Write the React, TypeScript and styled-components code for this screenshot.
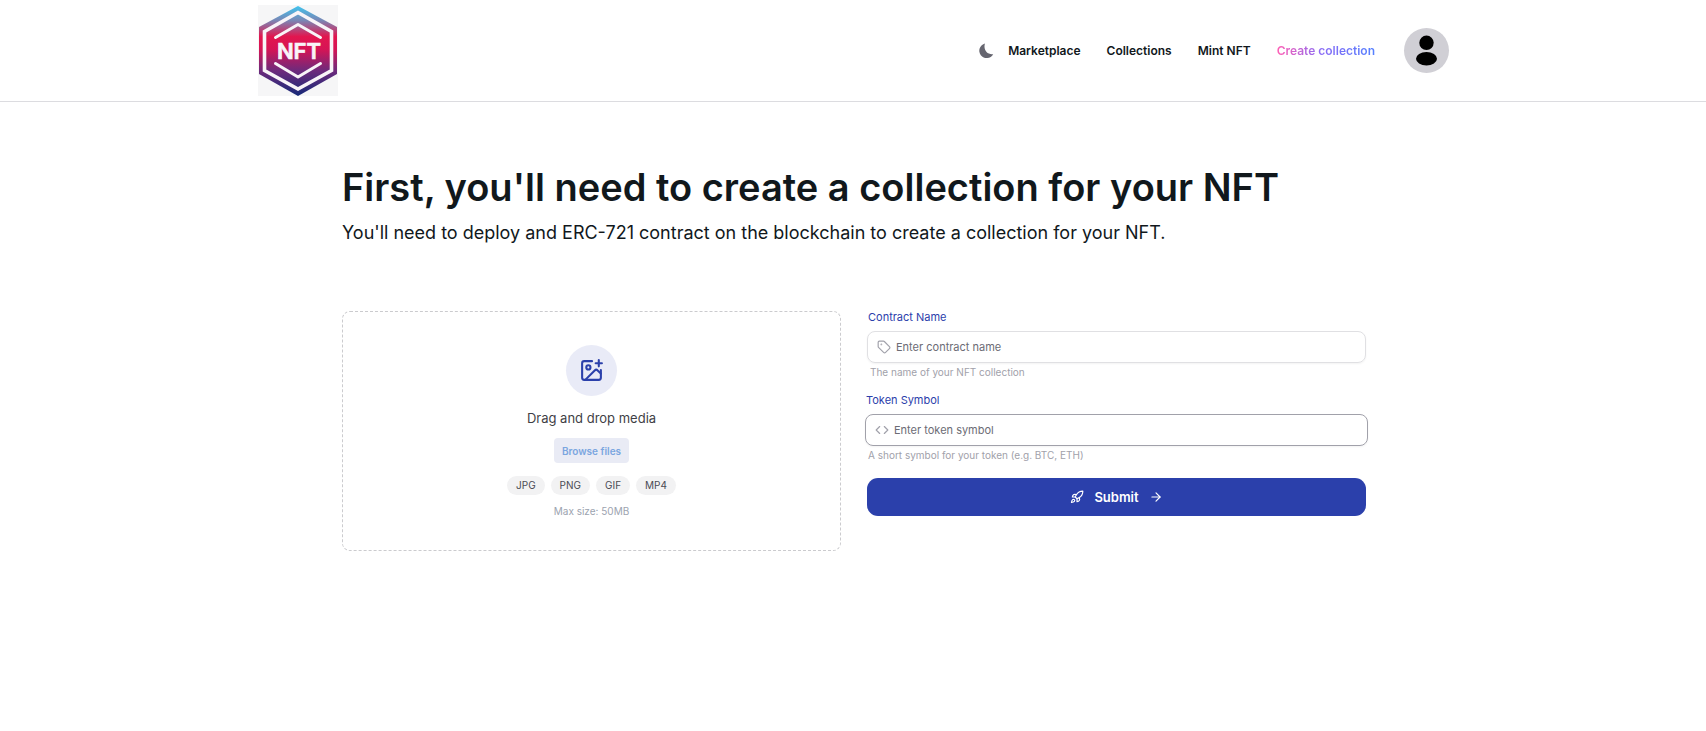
import React from 'react';
import styled, { createGlobalStyle, css } from 'styled-components';
import { ArrowRight, Code, ImagePlus, Rocket, Tag } from 'lucide-react';

const GlobalStyle = createGlobalStyle`
  *, *::before, *::after { box-sizing: border-box; }
  body {
    margin: 0;
    background: #fff;
    color: #11181c;
    font-family: Inter, "Liberation Sans", sans-serif;
  }
  h1, p, ul { margin: 0; padding: 0; }
  ul { list-style: none; }
  button, input { font-family: inherit; }
`;

const Header = styled.header`
  border-bottom: 1px solid #dcdce0;
`;

const HeaderInner = styled.div`
  display: flex;
  align-items: center;
  justify-content: space-between;
  max-width: 1192px;
  margin: 0 auto;
  padding: 5px 0 5px 1px;
`;

const LogoLink = styled.a`
  display: block;
  width: 80px;
  height: 91px;
  background: #f6f6f7;

  svg { display: block; }
`;

const Nav = styled.nav`
  display: flex;
  align-items: center;
`;

const ThemeButton = styled.button`
  display: flex;
  margin-right: 14px;
  padding: 0;
  border: 0;
  background: none;
  cursor: pointer;
`;

const NavList = styled.ul`
  display: flex;
  gap: 26px;
  margin-right: 29px;
`;

const NavLink = styled.a<{ $active?: boolean }>`
  display: block;
  color: #11181c;
  font-size: 12px;
  font-weight: 600;
  line-height: 20px;
  text-decoration: none;
  ${({ $active }) =>
    $active &&
    css`
      background: linear-gradient(90deg, #ff5fb4, #8b6cf5 45%, #5581ff);
      background-clip: text;
      color: transparent;
    `}
`;

const Avatar = styled.button`
  width: 45px;
  height: 45px;
  padding: 0;
  border: 0;
  border-radius: 50%;
  background: #d0cfd5;
  cursor: pointer;

  svg { display: block; }
`;

const Main = styled.main`
  max-width: 1026px;
  margin: 0 auto;
  padding: 60px 0 40px 2px;
`;

const Title = styled.h1`
  font-size: 38px;
  font-weight: 600;
  line-height: 50px;
`;

const Subtitle = styled.p`
  margin-top: 6px;
  font-size: 18px;
  line-height: 30px;
`;

const Columns = styled.div`
  display: grid;
  grid-template-columns: repeat(auto-fit, minmax(400px, 1fr));
  gap: 26px;
  align-items: start;
  margin-top: 63px;
`;

const DropZone = styled.section`
  display: flex;
  flex-direction: column;
  align-items: center;
  padding: 33px 24px 31px;
  border: 1px dashed #cbcbce;
  border-radius: 8px;
`;

const IconDisc = styled.div`
  display: grid;
  place-items: center;
  width: 51px;
  height: 51px;
  border-radius: 50%;
  background: #e9ebf7;
  color: #2b40ab;
`;

const DropText = styled.p`
  margin-top: 12px;
  color: #3f3f46;
  font-size: 13px;
  font-weight: 400;
  line-height: 20px;
`;

const BrowseButton = styled.button`
  height: 25px;
  margin-top: 10px;
  padding: 0 8px;
  border: 0;
  border-radius: 4px;
  background: #e9ebf5;
  color: #7ba6e0;
  font-size: 10px;
  font-weight: 600;
  cursor: pointer;
`;

const Chips = styled.ul`
  display: flex;
  gap: 6px;
  margin-top: 13px;
`;

const Chip = styled.li`
  padding: 0 9px;
  border-radius: 10px;
  background: #f2f2f3;
  color: #4b4b54;
  font-size: 10px;
  line-height: 19px;
`;

const Limit = styled.p`
  margin-top: 8px;
  color: #9ca3af;
  font-size: 10px;
  line-height: 16px;
`;

const Form = styled.form`
  display: flex;
  flex-direction: column;
`;

const Field = styled.div<{ $raised?: boolean }>`
  margin: ${({ $raised }) => ($raised ? '0 -2px 17px' : '0 0 16px')};
`;

const Label = styled.label`
  display: block;
  padding: 0 1px;
  color: #2b40ab;
  font-size: 11px;
  line-height: 12px;
`;

const InputShell = styled.div<{ $raised?: boolean }>`
  display: flex;
  align-items: center;
  gap: 5px;
  height: 32px;
  margin-top: 8px;
  padding: 0 9px;
  border: 1px solid ${({ $raised }) => ($raised ? '#a1a1aa' : '#e0e0e3')};
  border-radius: 8px;
  box-shadow: 0 1px 2px rgba(0, 0, 0, 0.05);
  color: #a1a1aa;

  svg { flex: none; }
`;

const Input = styled.input`
  flex: 1;
  min-width: 0;
  padding: 0;
  border: 0;
  outline: 0;
  background: none;
  color: #11181c;
  font-size: 11px;
  line-height: 16px;

  &::placeholder { color: #6c6c75; opacity: 1; }
`;

const Hint = styled.p`
  margin-top: 3px;
  padding: 0 3px;
  color: #a1a1aa;
  font-size: 10px;
  line-height: 12px;
`;

const SubmitButton = styled.button`
  display: flex;
  align-items: center;
  justify-content: center;
  gap: 10px;
  height: 38px;
  border: 0;
  border-radius: 11px;
  background: #2b40ab;
  color: #fff;
  font-size: 13px;
  font-weight: 600;
  cursor: pointer;
`;

const NAV_ITEMS = [
  { label: 'Marketplace' },
  { label: 'Collections' },
  { label: 'Mint NFT' },
  { label: 'Create collection', active: true },
];

const FORMATS = ['JPG', 'PNG', 'GIF', 'MP4'];

function Logo() {
  return (
    <svg width="80" height="91" viewBox="0 0 80 91" fill="none" aria-hidden="true">
      <defs>
        <linearGradient id="logoFill" x1="0" y1="0" x2="0" y2="1">
          <stop offset="0" stopColor="#3fc4ee" />
          <stop offset="0.16" stopColor="#7a86b5" />
          <stop offset="0.34" stopColor="#e2164f" />
          <stop offset="0.48" stopColor="#d61455" />
          <stop offset="0.72" stopColor="#6d2a7c" />
          <stop offset="1" stopColor="#152a78" />
        </linearGradient>
      </defs>
      <path d="M40 1 79 22v47L40 91 1 69V22Z" fill="url(#logoFill)" />
      <path d="M40 7.500 73.500 26.500V65.500L40 84 6.500 65.500V26.500Z" stroke="#f8f4f8" strokeWidth="3.600" />
      <path d="M17.500 32.500 40 19.500 62.500 32.500M17.500 58.500 40 72 62.500 58.500" stroke="#f8f4f8" strokeWidth="3" strokeLinecap="round" strokeLinejoin="round" />
      <text x="41" y="53.500" textAnchor="middle" fill="#f8f4f8" stroke="#f8f4f8" strokeWidth="0.700" fontFamily="Inter, sans-serif" fontSize="22" fontWeight="600">
        NFT
      </text>
    </svg>
  );
}

function Moon() {
  return (
    <svg width="16" height="16" viewBox="0 0 16 16" aria-hidden="true">
      <path d="M7 0.500C5 6.500 9 12 15.200 11.200A7.400 7.400 0 1 1 7 0.500Z" fill="#666670" />
    </svg>
  );
}

interface TextFieldProps {
  id: string;
  label: string;
  placeholder: string;
  hint: string;
  icon: React.ReactNode;
  raised?: boolean;
}

function TextField({ id, label, placeholder, hint, icon, raised }: TextFieldProps) {
  return (
    <Field $raised={raised}>
      <Label htmlFor={id}>{label}</Label>
      <InputShell $raised={raised}>
        {icon}
        <Input id={id} type="text" placeholder={placeholder} aria-describedby={`${id}-hint`} />
      </InputShell>
      <Hint id={`${id}-hint`}>{hint}</Hint>
    </Field>
  );
}

export default function App() {
  return (
    <>
      <GlobalStyle />
      <Header>
        <HeaderInner>
          <LogoLink href="#" aria-label="Home">
            <Logo />
          </LogoLink>
          <Nav>
            <ThemeButton type="button" aria-label="Toggle dark mode">
              <Moon />
            </ThemeButton>
            <NavList>
              {NAV_ITEMS.map(({ label, active }) => (
                <li key={label}>
                  <NavLink href="#" $active={active}>{label}</NavLink>
                </li>
              ))}
            </NavList>
            <Avatar type="button" aria-label="Account">
              <svg width="45" height="45" viewBox="0 0 45 45" aria-hidden="true">
                <circle cx="22.500" cy="14.800" r="7.200" />
                <ellipse cx="22.500" cy="30.700" rx="10.500" ry="6.800" />
              </svg>
            </Avatar>
          </Nav>
        </HeaderInner>
      </Header>
      <Main>
        <Title>First, you'll need to create a collection for your NFT</Title>
        <Subtitle>
          You'll need to deploy and ERC-721 contract on the blockchain to create a collection for your NFT.
        </Subtitle>
        <Columns>
          <DropZone aria-label="Media upload">
            <IconDisc>
              <ImagePlus size={25} />
            </IconDisc>
            <DropText>Drag and drop media</DropText>
            <BrowseButton type="button">Browse files</BrowseButton>
            <Chips>
              {FORMATS.map((format) => (
                <Chip key={format}>{format}</Chip>
              ))}
            </Chips>
            <Limit>Max size: 50MB</Limit>
          </DropZone>
          <Form onSubmit={(event) => event.preventDefault()}>
            <TextField
              id="contract-name"
              label="Contract Name"
              placeholder="Enter contract name"
              hint="The name of your NFT collection"
              icon={<Tag size={14} strokeWidth={2} />}
            />
            <TextField
              id="token-symbol"
              label="Token Symbol"
              placeholder="Enter token symbol"
              hint="A short symbol for your token (e.g. BTC, ETH)"
              icon={<Code size={14} strokeWidth={2} />}
              raised
            />
            <SubmitButton type="submit">
              <Rocket size={14} />
              Submit
              <ArrowRight size={14} />
            </SubmitButton>
          </Form>
        </Columns>
      </Main>
    </>
  );
}
